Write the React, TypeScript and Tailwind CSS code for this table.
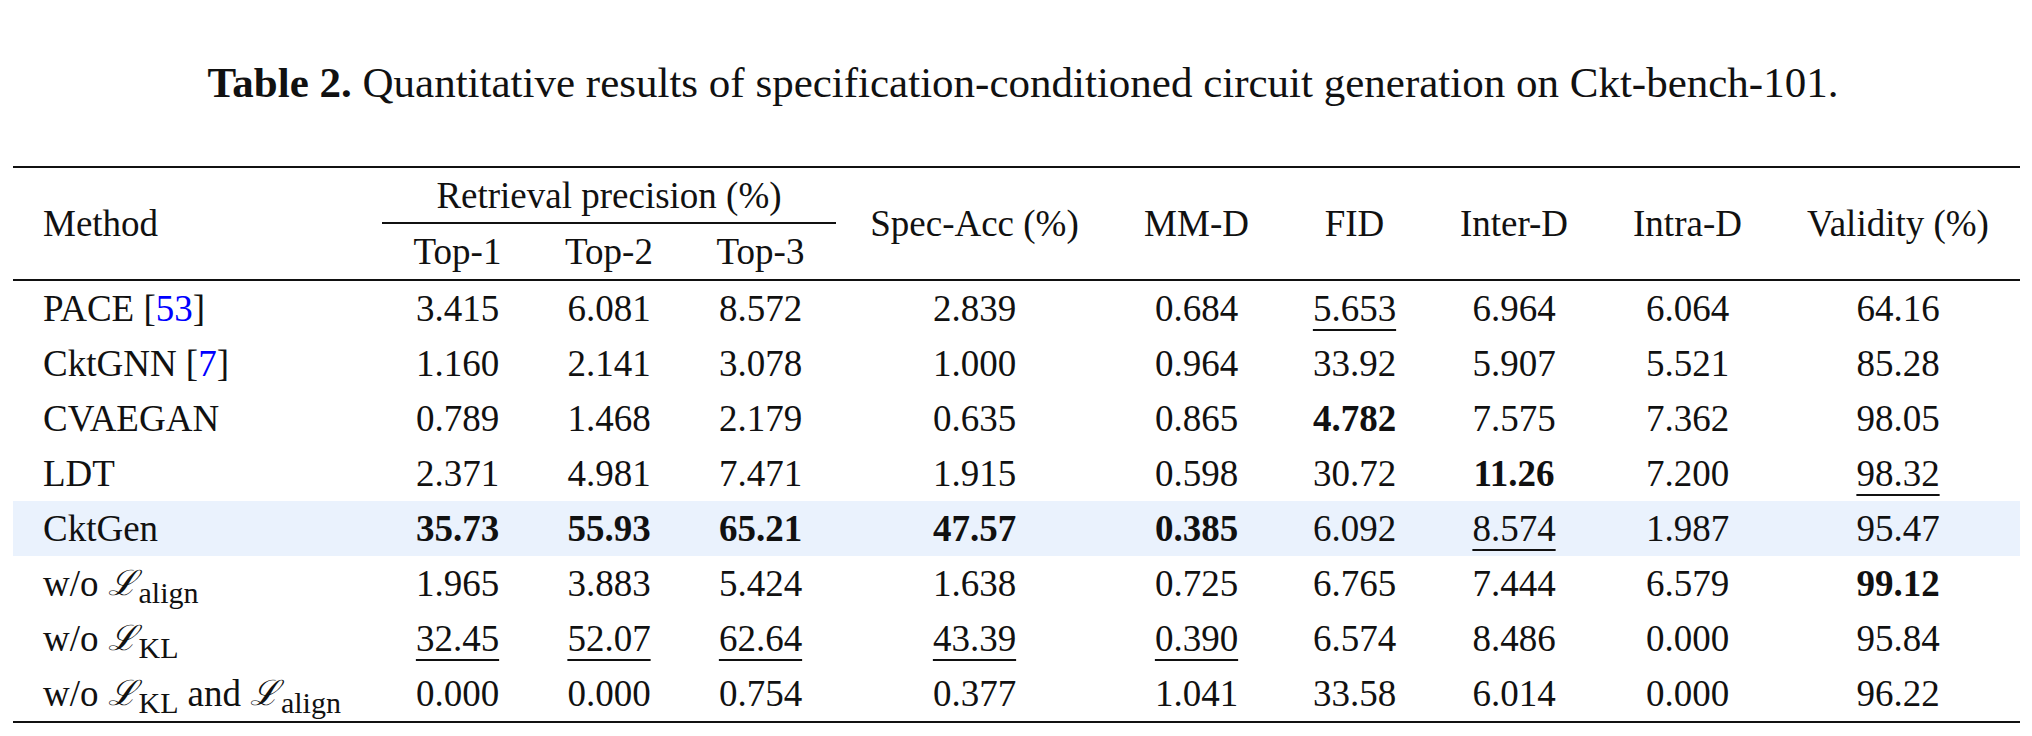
import React from "react";

const serif = "font-['Liberation_Serif','Times_New_Roman',serif]";
const cols =
  "grid grid-cols-[369px_151px_152px_151px_277px_167px_149px_170px_177px_244px]";

type Cell = { v: string; b?: boolean; u?: boolean };

function L({ sub }: { sub: string }) {
  return (
    <span className="ml-[9px] inline-flex items-baseline whitespace-nowrap">
      <span className="font-['DejaVu_Serif',serif] text-[35px] italic">ℒ</span>
      <span className="relative top-[8px] ml-[2px] text-[30px]">{sub}</span>
    </span>
  );
}

const rows: { name: React.ReactNode; cells: Cell[]; hl?: boolean }[] = [
  {
    name: (
      <>
        PACE [<span className="text-[#0000ff]">53</span>]
      </>
    ),
    cells: [
      { v: "3.415" },
      { v: "6.081" },
      { v: "8.572" },
      { v: "2.839" },
      { v: "0.684" },
      { v: "5.653", u: true },
      { v: "6.964" },
      { v: "6.064" },
      { v: "64.16" },
    ],
  },
  {
    name: (
      <>
        CktGNN [<span className="text-[#0000ff]">7</span>]
      </>
    ),
    cells: [
      { v: "1.160" },
      { v: "2.141" },
      { v: "3.078" },
      { v: "1.000" },
      { v: "0.964" },
      { v: "33.92" },
      { v: "5.907" },
      { v: "5.521" },
      { v: "85.28" },
    ],
  },
  {
    name: "CVAEGAN",
    cells: [
      { v: "0.789" },
      { v: "1.468" },
      { v: "2.179" },
      { v: "0.635" },
      { v: "0.865" },
      { v: "4.782", b: true },
      { v: "7.575" },
      { v: "7.362" },
      { v: "98.05" },
    ],
  },
  {
    name: "LDT",
    cells: [
      { v: "2.371" },
      { v: "4.981" },
      { v: "7.471" },
      { v: "1.915" },
      { v: "0.598" },
      { v: "30.72" },
      { v: "11.26", b: true },
      { v: "7.200" },
      { v: "98.32", u: true },
    ],
  },
  {
    name: "CktGen",
    hl: true,
    cells: [
      { v: "35.73", b: true },
      { v: "55.93", b: true },
      { v: "65.21", b: true },
      { v: "47.57", b: true },
      { v: "0.385", b: true },
      { v: "6.092" },
      { v: "8.574", u: true },
      { v: "1.987" },
      { v: "95.47" },
    ],
  },
  {
    name: (
      <>
        w/o
        <L sub="align" />
      </>
    ),
    cells: [
      { v: "1.965" },
      { v: "3.883" },
      { v: "5.424" },
      { v: "1.638" },
      { v: "0.725" },
      { v: "6.765" },
      { v: "7.444" },
      { v: "6.579" },
      { v: "99.12", b: true },
    ],
  },
  {
    name: (
      <>
        w/o
        <L sub="KL" />
      </>
    ),
    cells: [
      { v: "32.45", u: true },
      { v: "52.07", u: true },
      { v: "62.64", u: true },
      { v: "43.39", u: true },
      { v: "0.390", u: true },
      { v: "6.574" },
      { v: "8.486" },
      { v: "0.000" },
      { v: "95.84" },
    ],
  },
  {
    name: (
      <>
        w/o
        <L sub="KL" />
        <span className="ml-[9px]">and</span>
        <L sub="align" />
      </>
    ),
    cells: [
      { v: "0.000" },
      { v: "0.000" },
      { v: "0.754" },
      { v: "0.377" },
      { v: "1.041" },
      { v: "33.58" },
      { v: "6.014" },
      { v: "0.000" },
      { v: "96.22" },
    ],
  },
];

export default function App() {
  return (
    <div className={`h-[736px] w-[2032px] bg-white text-[#111] ${serif}`}>
      <p className="pl-[14px] pt-[59px] text-center text-[43px] leading-[48px]">
        <span className="font-bold">Table 2.</span> Quantitative results of
        specification-conditioned circuit generation on Ckt-bench-101.
      </p>

      <div className="ml-[13px] mt-[59px] w-[2007px] text-[37px] leading-none">
        {/* header */}
        <div
          className={`${cols} grid-rows-[56px_55px] border-y-2 border-[#111]`}
        >
          <div className="row-span-2 flex items-center pl-[30px]">Method</div>
          <div className="col-span-3 flex items-center justify-center border-b-2 border-[#111]">
            Retrieval precision (%)
          </div>
          <div className="row-span-2 flex items-center justify-center">
            Spec-Acc (%)
          </div>
          <div className="row-span-2 flex items-center justify-center">MM-D</div>
          <div className="row-span-2 flex items-center justify-center">FID</div>
          <div className="row-span-2 flex items-center justify-center">
            Inter-D
          </div>
          <div className="row-span-2 flex items-center justify-center">
            Intra-D
          </div>
          <div className="row-span-2 flex items-center justify-center">
            Validity (%)
          </div>
          <div className="flex items-center justify-center">Top-1</div>
          <div className="flex items-center justify-center">Top-2</div>
          <div className="flex items-center justify-center">Top-3</div>
        </div>

        {/* body */}
        <div className="border-b-2 border-[#111]">
          {rows.map((r, i) => (
            <div
              key={i}
              className={`${cols} h-[55px] ${r.hl ? "bg-[#eaf2fd]" : ""}`}
            >
              <div className="flex items-center whitespace-nowrap pl-[30px]">
                {r.name}
              </div>
              {r.cells.map((c, j) => (
                <div key={j} className="flex items-center justify-center">
                  <span
                    className={`${c.b ? "font-bold" : ""} ${
                      c.u
                        ? "underline decoration-2 underline-offset-[8px]"
                        : ""
                    }`}
                  >
                    {c.v}
                  </span>
                </div>
              ))}
            </div>
          ))}
        </div>
      </div>
    </div>
  );
}
